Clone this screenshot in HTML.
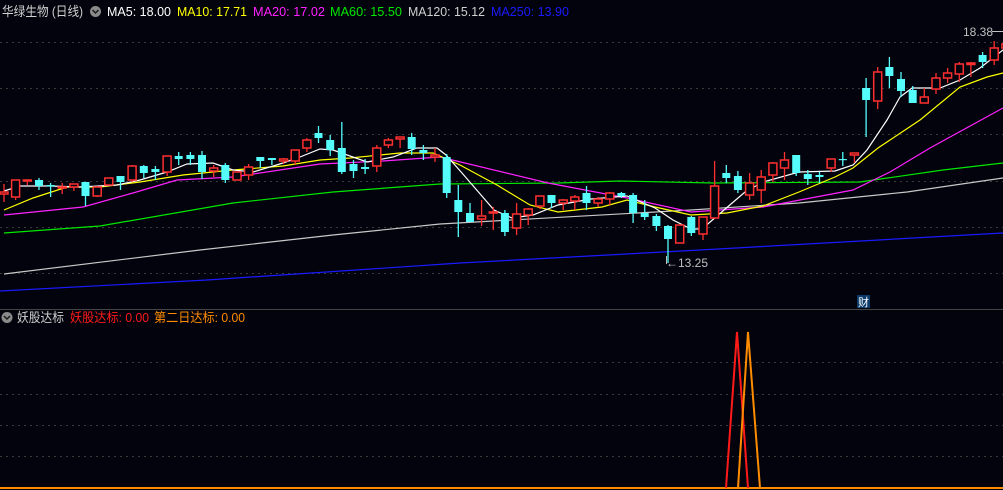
<!DOCTYPE html>
<html><head><meta charset="utf-8"><style>
html,body{margin:0;padding:0;background:#02030c;width:1003px;height:490px;overflow:hidden}
svg{display:block}
text{font-family:"Liberation Sans","Noto Sans CJK SC",sans-serif}
.r{fill:#02030c;stroke:#ff3030;stroke-width:1.5}
.c{fill:#54fcfc}
.wr{stroke:#ff3030;stroke-width:1.3}
.wc{stroke:#54fcfc;stroke-width:1.3}
.g{stroke:#3a3a3a;stroke-width:1;stroke-dasharray:2 4}
.ma{fill:none;stroke-width:1.2}
</style></head><body>
<svg width="1003" height="490" viewBox="0 0 1003 490">
<!-- grid -->
<line class="g" x1="0" y1="42.5" x2="1003" y2="42.5"/>
<line class="g" x1="0" y1="88.5" x2="1003" y2="88.5"/>
<line class="g" x1="0" y1="134.5" x2="1003" y2="134.5"/>
<line class="g" x1="0" y1="181.5" x2="1003" y2="181.5"/>
<line class="g" x1="0" y1="227.5" x2="1003" y2="227.5"/>
<line class="g" x1="0" y1="273.5" x2="1003" y2="273.5"/>
<line class="g" x1="0" y1="362.5" x2="1003" y2="362.5"/>
<line class="g" x1="0" y1="394.5" x2="1003" y2="394.5"/>
<line class="g" x1="0" y1="425.5" x2="1003" y2="425.5"/>
<line class="g" x1="0" y1="456.5" x2="1003" y2="456.5"/>
<line x1="0" y1="309.5" x2="1003" y2="309.5" stroke="#454545" stroke-width="1"/>

<!-- MAs -->
<polyline class="ma" stroke="#1a1aff" points="0,291 207,280 460,263 700,250 1003,233"/>
<polyline class="ma" stroke="#c8c8c8" points="4,274 200,250 333,235 440,224 691,210 799,203 907,192 1003,178"/>
<polyline class="ma" stroke="#00e800" points="4,233 100,226 233,203 333,192 440,184 558,183 620,181 713,183 860,182 943,170 1003,163"/>
<polyline class="ma" stroke="#ff22ff" points="4,215 83,207 133,193 177,180 233,177 320,164 383,161 440,157 548,183 627,198 691,212 763,207 853,190 890,172 930,148 1003,108"/>
<polyline class="ma" stroke="#ffff00" points="4,210 33,198 67,187 100,187 140,182 183,175 233,170 283,166 320,160 350,158 400,153 433,153 460,165 497,185 530,205 558,212 602,207 627,200 655,207 691,215 727,213 763,206 799,192 835,177 853,168 878,148 920,120 960,87 987,77 1003,73"/>
<polyline class="ma" stroke="#ffffff" points="4,191 20,186 50,186 80,187 117,185 140,180 167,172 187,164 213,163 233,170 253,172 283,163 300,157 320,149 333,150 367,162 393,157 417,148 437,148 446,155 462,173 494,210 512,218 533,215 558,205 591,199 627,196 655,208 673,220 691,229 702,229 724,210 745,192 763,182 799,172 835,171 853,165 867,150 887,120 900,97 912,88 940,88 960,80 980,68 1003,50"/>

<!-- candles -->
<g>
<line class="wr" x1="4" y1="184" x2="4" y2="202"/><rect class="r" x="0" y="192" width="8" height="2"/>
<line class="wr" x1="15.6" y1="180" x2="15.6" y2="200"/><rect class="r" x="11.6" y="180" width="8" height="17"/>
<line class="wr" x1="27.3" y1="180" x2="27.3" y2="185"/><rect class="r" x="23.3" y="180" width="8" height="1"/>
<line class="wc" x1="39" y1="178" x2="39" y2="190"/><rect class="c" x="35" y="180" width="8" height="6"/>
<line class="wc" x1="50.6" y1="183" x2="50.6" y2="197"/><rect class="c" x="46.6" y="185" width="8" height="1.5"/>
<line class="wr" x1="62.2" y1="183" x2="62.2" y2="194"/><rect class="r" x="58.2" y="187" width="8" height="1"/>
<line class="wr" x1="73.9" y1="184" x2="73.9" y2="191"/><rect class="r" x="69.9" y="184" width="8" height="3"/>
<line class="wc" x1="85.5" y1="182" x2="85.5" y2="206"/><rect class="c" x="81.5" y="182" width="8" height="14"/>
<line class="wr" x1="97.2" y1="186" x2="97.2" y2="197"/><rect class="r" x="93.2" y="187" width="8" height="9"/>
<line class="wr" x1="108.8" y1="178" x2="108.8" y2="185"/><rect class="r" x="104.8" y="178" width="8" height="7"/>
<line class="wc" x1="120.5" y1="176" x2="120.5" y2="190"/><rect class="c" x="116.5" y="176" width="8" height="6"/>
<line class="wr" x1="132.1" y1="165" x2="132.1" y2="182"/><rect class="r" x="128.1" y="166" width="8" height="14"/>
<line class="wc" x1="143.8" y1="165" x2="143.8" y2="178"/><rect class="c" x="139.8" y="166" width="8" height="7"/>
<line class="wc" x1="155.4" y1="166" x2="155.4" y2="180"/><rect class="c" x="151.4" y="169" width="8" height="3"/>
<line class="wr" x1="167.1" y1="156" x2="167.1" y2="176"/><rect class="r" x="163.1" y="156" width="8" height="16"/>
<line class="wc" x1="178.7" y1="152" x2="178.7" y2="165"/><rect class="c" x="174.7" y="156" width="8" height="3"/>
<line class="wc" x1="190.4" y1="152" x2="190.4" y2="165"/><rect class="c" x="186.4" y="155" width="8" height="4"/>
<line class="wc" x1="202" y1="151" x2="202" y2="179"/><rect class="c" x="198" y="155" width="8" height="17"/>
<line class="wr" x1="213.7" y1="165" x2="213.7" y2="177"/><rect class="r" x="209.7" y="168" width="8" height="3"/>
<line class="wc" x1="225.3" y1="163" x2="225.3" y2="183"/><rect class="c" x="221.3" y="165" width="8" height="15"/>
<line class="wr" x1="237" y1="172" x2="237" y2="180"/><rect class="r" x="233" y="172" width="8" height="8"/>
<line class="wr" x1="248.6" y1="164" x2="248.6" y2="180"/><rect class="r" x="244.6" y="167" width="8" height="8"/>
<line class="wc" x1="260.3" y1="157" x2="260.3" y2="168"/><rect class="c" x="256.3" y="157" width="8" height="4"/>
<line class="wc" x1="271.9" y1="158" x2="271.9" y2="165"/><rect class="c" x="267.9" y="158" width="8" height="2"/>
<line class="wr" x1="283.6" y1="158" x2="283.6" y2="164"/><rect class="r" x="279.6" y="159" width="8" height="2"/>
<line class="wr" x1="295.2" y1="150" x2="295.2" y2="165"/><rect class="r" x="291.2" y="150" width="8" height="11"/>
<line class="wr" x1="306.9" y1="138" x2="306.9" y2="152"/><rect class="r" x="302.9" y="140" width="8" height="8"/>
<line class="wc" x1="318.5" y1="126" x2="318.5" y2="143"/><rect class="c" x="314.5" y="133" width="8" height="5"/>
<line class="wc" x1="330.2" y1="135" x2="330.2" y2="156"/><rect class="c" x="326.2" y="140" width="8" height="10"/>
<line class="wc" x1="341.8" y1="122" x2="341.8" y2="174"/><rect class="c" x="337.8" y="148" width="8" height="24"/>
<line class="wc" x1="353.5" y1="160" x2="353.5" y2="178"/><rect class="c" x="349.5" y="164" width="8" height="7"/>
<line class="wc" x1="365.1" y1="159" x2="365.1" y2="174"/><rect class="c" x="361.1" y="167" width="8" height="2"/>
<line class="wr" x1="376.8" y1="145" x2="376.8" y2="172"/><rect class="r" x="372.8" y="148" width="8" height="18"/>
<line class="wr" x1="388.4" y1="138" x2="388.4" y2="148"/><rect class="r" x="384.4" y="140" width="8" height="5"/>
<line class="wr" x1="400.1" y1="137" x2="400.1" y2="148"/><rect class="r" x="396.1" y="137" width="8" height="2"/>
<line class="wc" x1="411.7" y1="133" x2="411.7" y2="155"/><rect class="c" x="407.7" y="137" width="8" height="12"/>
<line class="wc" x1="423.4" y1="145" x2="423.4" y2="160"/><rect class="c" x="419.4" y="150" width="8" height="3"/>
<line class="wr" x1="435" y1="148" x2="435" y2="162"/><rect class="r" x="431" y="155" width="8" height="2"/>
<line class="wc" x1="446.7" y1="154" x2="446.7" y2="198"/><rect class="c" x="442.7" y="157" width="8" height="36"/>
<line class="wc" x1="458.3" y1="185" x2="458.3" y2="237"/><rect class="c" x="454.3" y="200" width="8" height="12"/>
<line class="wc" x1="470" y1="203" x2="470" y2="222"/><rect class="c" x="466" y="213" width="8" height="9"/>
<line class="wr" x1="481.6" y1="200" x2="481.6" y2="226"/><rect class="r" x="477.6" y="216" width="8" height="3"/>
<line class="wr" x1="493.3" y1="207" x2="493.3" y2="230"/><rect class="r" x="489.3" y="212" width="8" height="1"/>
<line class="wc" x1="504.9" y1="210" x2="504.9" y2="236"/><rect class="c" x="500.9" y="213" width="8" height="19"/>
<line class="wr" x1="516.6" y1="203" x2="516.6" y2="235"/><rect class="r" x="512.6" y="214" width="8" height="14"/>
<line class="wr" x1="528.2" y1="208" x2="528.2" y2="225"/><rect class="r" x="524.2" y="209" width="8" height="6"/>
<line class="wr" x1="539.9" y1="196" x2="539.9" y2="209"/><rect class="r" x="535.9" y="196" width="8" height="10"/>
<line class="wc" x1="551.5" y1="195" x2="551.5" y2="208"/><rect class="c" x="547.5" y="195" width="8" height="8"/>
<line class="wr" x1="563.2" y1="199" x2="563.2" y2="210"/><rect class="r" x="559.2" y="200" width="8" height="3"/>
<line class="wr" x1="574.8" y1="195" x2="574.8" y2="210"/><rect class="r" x="570.8" y="197" width="8" height="4"/>
<line class="wc" x1="586.5" y1="186" x2="586.5" y2="210"/><rect class="c" x="582.5" y="193" width="8" height="10"/>
<line class="wr" x1="598.1" y1="197" x2="598.1" y2="207"/><rect class="r" x="594.1" y="199" width="8" height="4"/>
<line class="wr" x1="609.8" y1="192" x2="609.8" y2="205"/><rect class="r" x="605.8" y="193" width="8" height="6"/>
<line class="wc" x1="621.4" y1="192" x2="621.4" y2="198"/><rect class="c" x="617.4" y="193" width="8" height="3"/>
<line class="wc" x1="633.1" y1="193" x2="633.1" y2="223"/><rect class="c" x="629.1" y="195" width="8" height="18"/>
<line class="wc" x1="644.7" y1="200" x2="644.7" y2="220"/><rect class="c" x="640.7" y="213" width="8" height="4"/>
<line class="wc" x1="656.4" y1="214" x2="656.4" y2="231"/><rect class="c" x="652.4" y="216" width="8" height="10"/>
<line class="wc" x1="668" y1="225" x2="668" y2="263"/><rect class="c" x="664" y="226" width="8" height="13"/>
<line class="wr" x1="679.7" y1="225" x2="679.7" y2="243"/><rect class="r" x="675.7" y="225" width="8" height="18"/>
<line class="wc" x1="691.3" y1="216" x2="691.3" y2="236"/><rect class="c" x="687.3" y="217" width="8" height="16"/>
<line class="wr" x1="703" y1="217" x2="703" y2="240"/><rect class="r" x="699" y="217" width="8" height="17"/>
<line class="wr" x1="714.6" y1="161" x2="714.6" y2="218"/><rect class="r" x="710.6" y="186" width="8" height="32"/>
<line class="wc" x1="726.3" y1="165" x2="726.3" y2="183"/><rect class="c" x="722.3" y="173" width="8" height="5"/>
<line class="wc" x1="737.9" y1="171" x2="737.9" y2="193"/><rect class="c" x="733.9" y="176" width="8" height="14"/>
<line class="wr" x1="749.6" y1="173" x2="749.6" y2="200"/><rect class="r" x="745.6" y="183" width="8" height="12"/>
<line class="wr" x1="761.2" y1="170" x2="761.2" y2="203"/><rect class="r" x="757.2" y="177" width="8" height="13"/>
<line class="wr" x1="772.9" y1="162" x2="772.9" y2="182"/><rect class="r" x="768.9" y="163" width="8" height="12"/>
<line class="wr" x1="784.5" y1="152" x2="784.5" y2="180"/><rect class="r" x="780.5" y="160" width="8" height="8"/>
<line class="wc" x1="796.2" y1="155" x2="796.2" y2="176"/><rect class="c" x="792.2" y="155" width="8" height="18"/>
<line class="wc" x1="807.8" y1="170" x2="807.8" y2="185"/><rect class="c" x="803.8" y="174" width="8" height="5"/>
<line class="wc" x1="819.5" y1="172" x2="819.5" y2="183"/><rect class="c" x="815.5" y="175" width="8" height="2"/>
<line class="wr" x1="831.1" y1="159" x2="831.1" y2="172"/><rect class="r" x="827.1" y="159" width="8" height="9"/>
<line class="wc" x1="842.8" y1="152" x2="842.8" y2="166"/><rect class="c" x="838.8" y="159" width="8" height="1.2"/>
<line class="wr" x1="854.4" y1="153" x2="854.4" y2="163"/><rect class="r" x="850.4" y="153" width="8" height="2"/>
<line class="wc" x1="866.1" y1="78" x2="866.1" y2="137"/><rect class="c" x="862.1" y="88" width="8" height="12"/>
<line class="wr" x1="877.7" y1="67" x2="877.7" y2="109"/><rect class="r" x="873.7" y="72" width="8" height="29"/>
<line class="wc" x1="889.4" y1="57" x2="889.4" y2="88"/><rect class="c" x="885.4" y="67" width="8" height="9"/>
<line class="wc" x1="901" y1="72" x2="901" y2="97"/><rect class="c" x="897" y="79" width="8" height="12"/>
<line class="wc" x1="912.7" y1="86" x2="912.7" y2="103"/><rect class="c" x="908.7" y="90" width="8" height="13"/>
<line class="wr" x1="924.3" y1="88" x2="924.3" y2="103"/><rect class="r" x="920.3" y="97" width="8" height="6"/>
<line class="wr" x1="936" y1="73" x2="936" y2="94"/><rect class="r" x="932" y="78" width="8" height="11"/>
<line class="wr" x1="947.6" y1="68" x2="947.6" y2="83"/><rect class="r" x="943.6" y="73" width="8" height="5"/>
<line class="wr" x1="959.3" y1="62" x2="959.3" y2="82"/><rect class="r" x="955.3" y="64" width="8" height="10"/>
<line class="wr" x1="970.9" y1="62" x2="970.9" y2="77"/><rect class="r" x="966.9" y="63" width="8" height="1.5"/>
<line class="wc" x1="982.6" y1="52" x2="982.6" y2="68"/><rect class="c" x="978.6" y="55" width="8" height="7"/>
<line class="wr" x1="994.2" y1="41" x2="994.2" y2="65"/><rect class="r" x="990.2" y="48" width="8" height="12"/>
<line class="wr" x1="1005.9" y1="44" x2="1005.9" y2="50"/><rect class="r" x="1001.9" y="44" width="8" height="4"/>
</g>

<!-- price labels -->
<text x="963" y="36" font-size="12" fill="#c0c0c0">18.38</text>
<line x1="992" y1="31.5" x2="1003" y2="31.5" stroke="#c0c0c0"/>
<line x1="666.5" y1="256" x2="666.5" y2="264" stroke="#c0c0c0"/>
<text x="666" y="267" font-size="12" fill="#c0c0c0">←13.25</text>

<!-- 财 -->
<rect x="857" y="295" width="13" height="13" fill="#0b3a6a"/>
<text x="858" y="306" font-size="11" fill="#ffffff">财</text>

<!-- lower panel -->
<line x1="0" y1="488" x2="1003" y2="488" stroke="#ff8c00" stroke-width="2"/>
<polyline fill="none" stroke="#ff1a1a" stroke-width="2" points="726,488 737,332 748,488"/>
<polyline fill="none" stroke="#ff8c00" stroke-width="2" points="738,488 748,332 760,488"/>

<!-- header -->
<text x="2" y="16" font-size="13" fill="#d0d0d0" textLength="81" lengthAdjust="spacingAndGlyphs">华绿生物 (日线)</text>
<circle cx="95.5" cy="11.5" r="5.5" fill="#8a8a8a"/>
<path d="M92.5 10 L95.5 13 L98.5 10" stroke="#1a1a1a" stroke-width="1.5" fill="none"/>
<text x="107" y="16" font-size="13" fill="#ffffff" textLength="64" lengthAdjust="spacingAndGlyphs">MA5: 18.00</text>
<text x="177" y="16" font-size="13" fill="#ffff00" textLength="70" lengthAdjust="spacingAndGlyphs">MA10: 17.71</text>
<text x="253" y="16" font-size="13" fill="#ff22ff" textLength="72" lengthAdjust="spacingAndGlyphs">MA20: 17.02</text>
<text x="330" y="16" font-size="13" fill="#00e800" textLength="72" lengthAdjust="spacingAndGlyphs">MA60: 15.50</text>
<text x="408" y="16" font-size="13" fill="#d0d0d0" textLength="77" lengthAdjust="spacingAndGlyphs">MA120: 15.12</text>
<text x="491" y="16" font-size="13" fill="#1a1aff" textLength="78" lengthAdjust="spacingAndGlyphs">MA250: 13.90</text>

<circle cx="7" cy="317.5" r="5.5" fill="#8a8a8a"/>
<path d="M4 316 L7 319 L10 316" stroke="#1a1a1a" stroke-width="1.5" fill="none"/>
<text x="17" y="322" font-size="13" fill="#d0d0d0" textLength="47" lengthAdjust="spacingAndGlyphs">妖股达标</text>
<text x="70" y="322" font-size="13" fill="#ff1a1a" textLength="79" lengthAdjust="spacingAndGlyphs">妖股达标: 0.00</text>
<text x="154" y="322" font-size="13" fill="#ff8c00" textLength="91" lengthAdjust="spacingAndGlyphs">第二日达标: 0.00</text>
</svg>
</body></html>
